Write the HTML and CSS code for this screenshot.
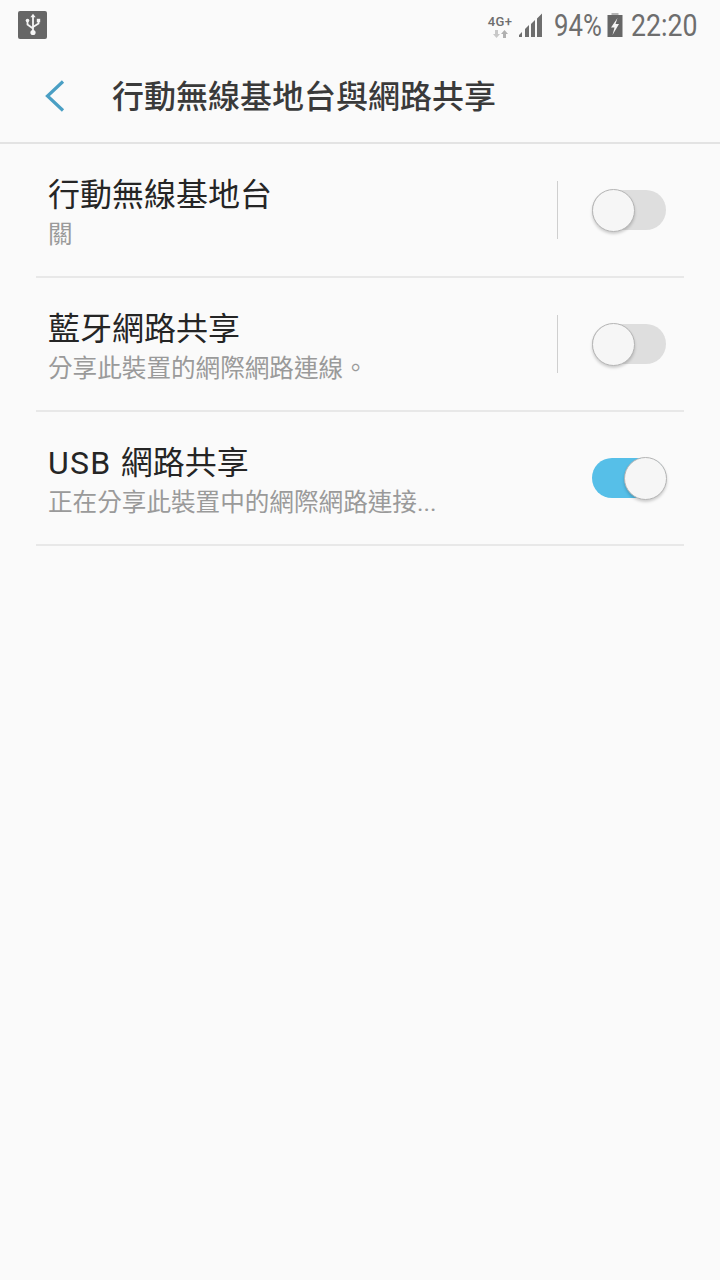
FILE: index.html
```html
<!DOCTYPE html>
<html lang="zh-Hant">
<head>
<meta charset="utf-8">
<title>行動無線基地台與網路共享</title>
<link rel="stylesheet" href="styles.css">
</head>
<body>
<div class="statusbar">
  <div class="usb-badge">
    <svg width="20" height="24" viewBox="0 0 20 24"><g fill="none" stroke="#f5f5f5" stroke-width="1.8"><path d="M10 3v17"/><path d="M4.500 8v3.500l5.500 4"/><path d="M15.500 8v2.500l-5.500 3.500"/></g><path d="M10 .8l2.600 3.400H7.400z" fill="#f5f5f5"/><circle cx="10" cy="19.500" r="2.600" fill="#f5f5f5"/><circle cx="4.500" cy="7.500" r="1.800" fill="#f5f5f5"/><rect x="13.800" y="5.800" width="3.400" height="3.400" fill="#f5f5f5"/></svg>
  </div>
  <div class="status-right">
    <div class="net">
      <span class="net-label">4G+</span>
      <svg class="net-arrows" width="15" height="8" viewBox="0 0 15 8"><path d="M2 0h3v4h2L3.500 8 0 4h2z" fill="#c8c8c8"/><path d="M10 8h3V4h2L11.500 0 8 4h2z" fill="#b0b0b0"/></svg>
    </div>
    <svg class="signal" width="25" height="24" viewBox="0 0 25 24"><path d="M0 24v-2l3-3v5zM6 24v-8l4-4v12zM12 24V11l4-4v17zM18 24V5.500l5-5V24z" fill="#6e6e6e"/></svg>
    <span class="pct">94%</span>
    <svg class="battery" width="16" height="24" viewBox="0 0 16 24"><path d="M4.500 0h7v2h-7z" fill="#b5b5b5"/><path d="M.5 2h15v22H.5z" fill="#666"/><path d="M10.500 5L4 14.500h3.500L5.500 22l6.500-11H8.500z" fill="#f5f5f5"/></svg>
    <span class="clock">22:20</span>
  </div>
</div>
<header class="appbar">
  <svg class="back" width="24" height="34" viewBox="0 0 24 34"><path d="M20 2.500L4.500 17 20 31.500" fill="none" stroke="#4a9fc4" stroke-width="3.200"/></svg>
  <h1 class="title">行動無線基地台與網路共享</h1>
</header>
<main class="list">
  <section class="row">
    <div class="text"><div class="name">行動無線基地台</div><div class="desc">關</div></div>
    <span class="divider"></span>
    <span class="switch"><span class="knob"></span></span>
  </section>
  <section class="row">
    <div class="text"><div class="name">藍牙網路共享</div><div class="desc">分享此裝置的網際網路連線。</div></div>
    <span class="divider"></span>
    <span class="switch"><span class="knob"></span></span>
  </section>
  <section class="row">
    <div class="text"><div class="name"><span class="latin">USB </span>網路共享</div><div class="desc">正在分享此裝置中的網際網路連接...</div></div>
    <span class="switch on"><span class="knob"></span></span>
  </section>
</main>
</body>
</html>
```

FILE: styles.css
```css
* { box-sizing: border-box; }
html, body { margin: 0; padding: 0; }
body {
  width: 720px;
  height: 1280px;
  overflow: hidden;
  background: #fafafa;
  font-family: Roboto, "Noto Sans CJK TC", sans-serif;
  color: #252525;
}
.statusbar {
  height: 50px;
  display: flex;
  justify-content: space-between;
  align-items: flex-start;
  padding: 11px 23px 0 18px;
}
.usb-badge {
  width: 29px;
  height: 28px;
  background: #666;
  border-radius: 2px;
  display: flex;
  align-items: center;
  justify-content: center;
}
.status-right {
  display: flex;
  align-items: center;
  height: 30px;
}
.net {
  width: 26px;
  margin-right: 6px;
  display: flex;
  flex-direction: column;
  align-items: center;
  margin-top: 1px;
}
.net-label {
  font-size: 13px;
  line-height: 14px;
  font-weight: 500;
  color: #6e6e6e;
  white-space: nowrap;
  letter-spacing: .4px;
}
.net-arrows { margin-top: 1px; }
.signal { margin: -2px 10px 0 0; flex: none; }
.pct, .clock {
  font-size: 31px;
  line-height: 30px;
  color: #6e6e6e;
  transform-origin: left center;
  white-space: nowrap;
}
.pct { width: 47px; transform: scaleX(.83); }
.battery { margin: -2px 8px 0 6px; flex: none; }
.clock { width: 66px; transform: scaleX(.86); }
.appbar {
  height: 94px;
  display: flex;
  align-items: center;
  padding-left: 43px;
  border-bottom: 2px solid #e3e3e3;
}
.back { flex: none; }
.title {
  margin: 2px 0 0 45px;
  font-size: 32px;
  line-height: 44px;
  font-weight: 500;
  color: #3a3a3a;
}
.list { padding: 0 36px; }
.row {
  height: 134px;
  display: flex;
  align-items: center;
  border-bottom: 2px solid #e8e8e8;
  padding: 0 18px 0 12px;
  position: relative;
}
.text { flex: 1; margin-top: 4px; }
.name {
  font-size: 32px;
  line-height: 44px;
  color: #252525;
}
.latin { letter-spacing: 1.25px; }
.desc {
  margin-top: 1px;
  font-size: 24.6px;
  line-height: 34px;
  color: #9a9a9a;
}
.divider {
  width: 1px;
  height: 58px;
  background: #cfcfcf;
  margin-right: 34px;
}
.switch {
  width: 74px;
  height: 40px;
  border-radius: 20px;
  background: #dedede;
  position: relative;
  flex: none;
}
.switch.on { background: #56bfe8; }
.knob {
  position: absolute;
  top: -1.5px;
  left: 0;
  width: 43px;
  height: 43px;
  border-radius: 50%;
  background: #f6f6f6;
  border: 1.5px solid #b5b5b5;
  box-shadow: 0 2px 3px rgba(0,0,0,.18);
}
.switch.on .knob { left: 32px; }
```
